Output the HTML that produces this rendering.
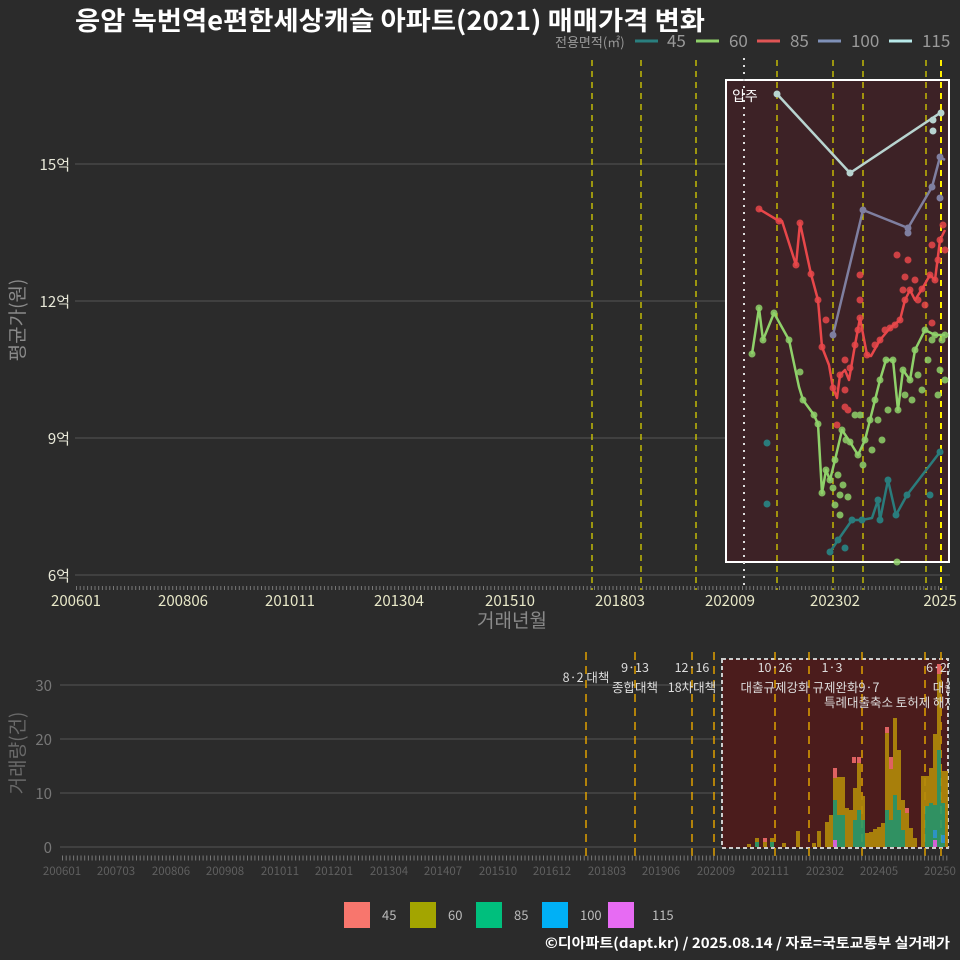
<!DOCTYPE html>
<html><head><meta charset="utf-8"><style>
html,body{margin:0;padding:0;background:#2b2b2b;}
svg{display:block;font-family:"Noto Sans CJK KR","Liberation Sans",sans-serif;}
</style></head><body>
<svg width="960" height="960" viewBox="0 0 960 960" xmlns="http://www.w3.org/2000/svg">
<rect width="960" height="960" fill="#2b2b2b"/>
<text x="75" y="30" fill="#fff" font-size="26" font-weight="bold" textLength="630" lengthAdjust="spacingAndGlyphs" font-family="Noto Sans CJK KR, sans-serif">응암 녹번역e편한세상캐슬 아파트(2021) 매매가격 변화</text>
<g font-size="17" fill="#9a9a9a">
<text x="555" y="47" font-size="13">전용면적(㎡)</text>
<line x1="635" y1="41" x2="658" y2="41" stroke="#2a7f7f" stroke-width="3"/><text x="667" y="47">45</text>
<line x1="696" y1="41" x2="719" y2="41" stroke="#8fd16a" stroke-width="3"/><text x="729" y="47">60</text>
<line x1="757" y1="41" x2="780" y2="41" stroke="#e05555" stroke-width="3"/><text x="790" y="47">85</text>
<line x1="818" y1="41" x2="841" y2="41" stroke="#7f91b8" stroke-width="3"/><text x="851" y="47">100</text>
<line x1="889" y1="41" x2="912" y2="41" stroke="#b8eaea" stroke-width="3"/><text x="922" y="47">115</text>
</g>
<g stroke="#666" stroke-width="0.8">
<line x1="75" y1="164" x2="950" y2="164"/><line x1="75" y1="301" x2="950" y2="301"/>
<line x1="75" y1="438" x2="950" y2="438"/><line x1="75" y1="575" x2="950" y2="575"/>
</g>
<g fill="#e8e8d8" font-size="15" text-anchor="end">
<text x="70" y="170">15억</text><text x="70" y="307">12억</text><text x="70" y="444">9억</text><text x="70" y="581">6억</text>
</g>
<text transform="translate(24,320) rotate(-90)" fill="#8a8a8a" font-size="19" text-anchor="middle">평균가(원)</text>
<rect x="726" y="80" width="223" height="482" fill="#3d2226" stroke="#fff" stroke-width="2"/>
<text x="732" y="101" fill="#fff" font-size="14">입주</text>
<line x1="744" y1="58" x2="744" y2="590" stroke="#ddd" stroke-width="2" stroke-dasharray="2,5"/>
<g stroke="#d8d000" stroke-width="1.3" stroke-dasharray="6,5">
<line x1="592" y1="60" x2="592" y2="590"/><line x1="641" y1="60" x2="641" y2="590"/><line x1="696" y1="60" x2="696" y2="590"/>
<line x1="777" y1="60" x2="777" y2="590"/><line x1="833" y1="60" x2="833" y2="590"/><line x1="863" y1="60" x2="863" y2="590"/>
<line x1="926" y1="60" x2="926" y2="590"/><line x1="941" y1="60" x2="941" y2="590" stroke="#ffee00" stroke-width="2"/>
</g>
<line x1="76" y1="588" x2="948" y2="588" stroke="#777" stroke-width="4" stroke-dasharray="1,2.7"/>
<g fill="#e8e8c8" font-size="15" text-anchor="middle">
<text x="76" y="606">200601</text><text x="183" y="606">200806</text><text x="290" y="606">201011</text><text x="399" y="606">201304</text>
<text x="510" y="606">201510</text><text x="620" y="606">201803</text><text x="730" y="606">202009</text><text x="835" y="606">202302</text><text x="940" y="606">2025</text>
</g>
<text x="512" y="627" fill="#8a8a8a" font-size="19" text-anchor="middle">거래년월</text>
<g fill="none" stroke-width="2.5" stroke-linejoin="round">
<polyline stroke="#b8d4d0" points="777,94 850,173 940,113"/>
<polyline stroke="#7f7fa0" points="833,335 863,210 908,228 932,187 940,157 945,160"/>
<polyline stroke="#e8474a" points="759,209 779,221 782,221 796,265 800,223 811,274 818,300 822,347 829,365 833,388 837,398 840,375 845,370 849,380 855,345 860,318 867,355 871,356 880,340 890,328 900,320 905,300 910,290 915,300 922,289 930,275 935,280 940,240 945,230"/>
<polyline stroke="#8fd16a" points="752,354 759,308 763,340 774,313 789,340 799,387 803,400 814,415 818,424 822,493 826,470 830,480 835,460 842,430 850,442 858,455 865,440 870,420 875,400 880,380 886,360 893,360 898,410 903,370 910,380 915,350 925,330 935,335 945,335"/>
<polyline stroke="#2a7c7c" points="830,552 838,540 845,530 852,520 862,520 872,518 878,500 880,520 888,480 896,515 907,495 940,452"/>
</g>
<g fill="#e8474a" opacity="0.85">
<circle cx="759" cy="209" r="3.5"/><circle cx="779" cy="221" r="3.5"/><circle cx="800" cy="223" r="3.5"/><circle cx="796" cy="265" r="3.5"/><circle cx="811" cy="274" r="3.5"/><circle cx="818" cy="300" r="3.5"/>
<circle cx="822" cy="347" r="3.5"/><circle cx="833" cy="388" r="3.5"/><circle cx="840" cy="375" r="3.5"/><circle cx="845" cy="360" r="3.5"/><circle cx="845" cy="390" r="3.5"/><circle cx="850" cy="368" r="3.5"/><circle cx="845" cy="407" r="3.5"/><circle cx="848" cy="410" r="3.5"/>
<circle cx="855" cy="345" r="3.5"/><circle cx="860" cy="318" r="3.5"/><circle cx="860" cy="275" r="3.5"/><circle cx="860" cy="300" r="3.5"/><circle cx="858" cy="330" r="3.5"/><circle cx="837" cy="425" r="3.5"/>
<circle cx="867" cy="355" r="3.5"/><circle cx="875" cy="345" r="3.5"/><circle cx="880" cy="340" r="3.5"/><circle cx="885" cy="330" r="3.5"/><circle cx="890" cy="328" r="3.5"/><circle cx="895" cy="325" r="3.5"/>
<circle cx="897" cy="255" r="3.5"/><circle cx="900" cy="320" r="3.5"/><circle cx="903" cy="290" r="3.5"/><circle cx="905" cy="300" r="3.5"/><circle cx="908" cy="260" r="3.5"/><circle cx="910" cy="290" r="3.5"/><circle cx="915" cy="280" r="3.5"/>
<circle cx="918" cy="300" r="3.5"/><circle cx="922" cy="289" r="3.5"/><circle cx="925" cy="305" r="3.5"/><circle cx="930" cy="275" r="3.5"/><circle cx="932" cy="245" r="3.5"/><circle cx="935" cy="280" r="3.5"/><circle cx="938" cy="260" r="3.5"/><circle cx="940" cy="240" r="3.5"/><circle cx="943" cy="225" r="3.5"/><circle cx="945" cy="250" r="3.5"/><circle cx="932" cy="323" r="3.5"/><circle cx="905" cy="277" r="3.5"/><circle cx="826" cy="320" r="3.5"/>
</g>
<g fill="#8fd16a" opacity="0.85">
<circle cx="752" cy="354" r="3.5"/><circle cx="759" cy="308" r="3.5"/><circle cx="763" cy="340" r="3.5"/><circle cx="774" cy="313" r="3.5"/><circle cx="789" cy="340" r="3.5"/><circle cx="800" cy="372" r="3.5"/><circle cx="803" cy="400" r="3.5"/><circle cx="814" cy="415" r="3.5"/><circle cx="818" cy="424" r="3.5"/><circle cx="822" cy="493" r="3.5"/>
<circle cx="826" cy="470" r="3.5"/><circle cx="830" cy="480" r="3.5"/><circle cx="833" cy="488" r="3.5"/><circle cx="835" cy="460" r="3.5"/><circle cx="838" cy="475" r="3.5"/><circle cx="840" cy="495" r="3.5"/><circle cx="843" cy="485" r="3.5"/><circle cx="848" cy="497" r="3.5"/><circle cx="835" cy="505" r="3.5"/><circle cx="840" cy="515" r="3.5"/>
<circle cx="842" cy="430" r="3.5"/><circle cx="846" cy="440" r="3.5"/><circle cx="850" cy="442" r="3.5"/><circle cx="855" cy="415" r="3.5"/><circle cx="860" cy="415" r="3.5"/><circle cx="858" cy="455" r="3.5"/><circle cx="863" cy="465" r="3.5"/><circle cx="865" cy="440" r="3.5"/><circle cx="870" cy="420" r="3.5"/><circle cx="872" cy="450" r="3.5"/>
<circle cx="875" cy="400" r="3.5"/><circle cx="878" cy="420" r="3.5"/><circle cx="880" cy="380" r="3.5"/><circle cx="882" cy="440" r="3.5"/><circle cx="886" cy="360" r="3.5"/><circle cx="888" cy="410" r="3.5"/><circle cx="893" cy="360" r="3.5"/><circle cx="898" cy="410" r="3.5"/><circle cx="903" cy="370" r="3.5"/><circle cx="905" cy="395" r="3.5"/>
<circle cx="910" cy="380" r="3.5"/><circle cx="912" cy="400" r="3.5"/><circle cx="915" cy="350" r="3.5"/><circle cx="918" cy="375" r="3.5"/><circle cx="922" cy="390" r="3.5"/><circle cx="925" cy="330" r="3.5"/><circle cx="928" cy="360" r="3.5"/><circle cx="932" cy="340" r="3.5"/><circle cx="935" cy="335" r="3.5"/><circle cx="938" cy="395" r="3.5"/><circle cx="940" cy="370" r="3.5"/><circle cx="942" cy="340" r="3.5"/><circle cx="945" cy="335" r="3.5"/><circle cx="945" cy="380" r="3.5"/><circle cx="897" cy="562" r="3.5"/>
</g>
<g fill="#2a7c7c"><circle cx="767" cy="443" r="3.5"/><circle cx="767" cy="504" r="3.5"/><circle cx="830" cy="552" r="3.5"/><circle cx="838" cy="540" r="3.5"/><circle cx="845" cy="548" r="3.5"/><circle cx="852" cy="520" r="3.5"/><circle cx="862" cy="520" r="3.5"/><circle cx="878" cy="500" r="3.5"/><circle cx="880" cy="520" r="3.5"/><circle cx="888" cy="480" r="3.5"/><circle cx="896" cy="515" r="3.5"/><circle cx="907" cy="495" r="3.5"/><circle cx="930" cy="495" r="3.5"/><circle cx="940" cy="452" r="3.5"/></g>
<g fill="#7f7fa0"><circle cx="833" cy="335" r="3.5"/><circle cx="863" cy="210" r="3.5"/><circle cx="908" cy="228" r="3.5"/><circle cx="908" cy="233" r="3.5"/><circle cx="932" cy="187" r="3.5"/><circle cx="940" cy="157" r="3.5"/><circle cx="940" cy="198" r="3.5"/></g>
<g fill="#b8d4d0"><circle cx="777" cy="94" r="3.5"/><circle cx="850" cy="173" r="3.5"/><circle cx="933" cy="120" r="3.5"/><circle cx="933" cy="131" r="3.5"/><circle cx="941" cy="113" r="3.5"/></g>

<g stroke="#666" stroke-width="0.8">
<line x1="60" y1="685" x2="950" y2="685"/><line x1="60" y1="739" x2="950" y2="739"/><line x1="60" y1="793" x2="950" y2="793"/><line x1="60" y1="847" x2="950" y2="847"/>
</g>
<g fill="#777" font-size="15" text-anchor="end">
<text x="52" y="691">30</text><text x="52" y="745">20</text><text x="52" y="799">10</text><text x="52" y="853">0</text>
</g>
<text transform="translate(24,753) rotate(-90)" fill="#6a6a6a" font-size="19" text-anchor="middle">거래량(건)</text>
<rect x="722" y="659" width="226" height="189" fill="#4b1c1c" stroke="#ccc" stroke-width="2" stroke-dasharray="4,3"/>
<g stroke="#e0a000" stroke-width="1.5" stroke-dasharray="8,6">
<line x1="586" y1="652" x2="586" y2="857"/><line x1="635" y1="652" x2="635" y2="857"/><line x1="692" y1="652" x2="692" y2="857"/><line x1="714" y1="652" x2="714" y2="857"/>
<line x1="775" y1="652" x2="775" y2="857"/><line x1="809" y1="652" x2="809" y2="857"/><line x1="862" y1="652" x2="862" y2="857"/><line x1="925" y1="652" x2="925" y2="857"/><line x1="941" y1="652" x2="941" y2="857"/>
</g>
<g opacity="0.9">
<g fill="#b38a0a">
<rect x="747" y="844" width="4" height="3"/><rect x="755" y="838" width="4" height="9"/><rect x="763" y="838" width="4" height="9"/><rect x="770" y="838" width="4" height="9"/><rect x="782" y="843" width="4" height="4"/>
<rect x="796" y="831" width="4" height="16"/><rect x="812" y="843" width="4" height="4"/><rect x="817" y="831" width="4" height="16"/><rect x="825" y="822" width="4" height="25"/>
<rect x="829" y="815" width="4" height="32"/><rect x="833" y="768" width="4" height="79"/><rect x="837" y="777" width="4" height="70"/><rect x="841" y="777" width="4" height="70"/><rect x="845" y="808" width="4" height="39"/><rect x="849" y="810" width="4" height="37"/>
<rect x="853" y="788" width="4" height="59"/><rect x="857" y="757" width="4" height="90"/><rect x="861" y="796" width="4" height="51"/><rect x="865" y="833" width="4" height="14"/><rect x="869" y="832" width="4" height="15"/><rect x="873" y="829" width="4" height="18"/><rect x="877" y="827" width="4" height="20"/>
<rect x="881" y="823" width="4" height="24"/><rect x="885" y="727" width="4" height="120"/><rect x="889" y="757" width="4" height="90"/><rect x="893" y="718" width="4" height="129"/><rect x="897" y="750" width="4" height="97"/><rect x="901" y="800" width="4" height="47"/><rect x="905" y="808" width="4" height="39"/><rect x="909" y="828" width="4" height="19"/><rect x="913" y="838" width="4" height="9"/>
<rect x="921" y="776" width="4" height="71"/><rect x="925" y="776" width="4" height="71"/><rect x="929" y="768" width="4" height="79"/><rect x="933" y="734" width="4" height="113"/><rect x="937" y="664" width="4" height="183"/><rect x="941" y="771" width="4" height="76"/><rect x="945" y="771" width="3" height="76"/>
</g>
<g fill="#2e9e6a">
<rect x="755" y="842" width="4" height="5"/><rect x="770" y="842" width="4" height="5"/><rect x="833" y="800" width="4" height="47"/><rect x="837" y="815" width="4" height="32"/><rect x="841" y="815" width="4" height="32"/>
<rect x="853" y="820" width="4" height="27"/><rect x="857" y="810" width="4" height="37"/><rect x="861" y="820" width="4" height="27"/><rect x="885" y="810" width="4" height="37"/><rect x="889" y="820" width="4" height="27"/><rect x="893" y="795" width="4" height="52"/><rect x="897" y="810" width="4" height="37"/><rect x="901" y="830" width="4" height="17"/>
<rect x="925" y="806" width="4" height="41"/><rect x="929" y="803" width="4" height="44"/><rect x="933" y="805" width="4" height="42"/><rect x="937" y="750" width="4" height="97"/><rect x="941" y="803" width="4" height="44"/>
</g>
<g fill="#f06a6a">
<rect x="763" y="838" width="4" height="4"/><rect x="833" y="768" width="4" height="10"/><rect x="852" y="757" width="4" height="6"/><rect x="857" y="757" width="4" height="6"/><rect x="885" y="727" width="4" height="6"/><rect x="889" y="757" width="4" height="12"/><rect x="905" y="808" width="4" height="5"/><rect x="937" y="664" width="4" height="10"/>
</g>
<g fill="#2aa0d8"><rect x="941" y="835" width="4" height="8"/><rect x="933" y="830" width="4" height="8"/></g>
<g fill="#e06ae8"><rect x="833" y="840" width="4" height="7"/><rect x="933" y="840" width="4" height="7"/></g>
</g>
<g fill="#ddd" font-size="12.5" text-anchor="middle">
<text x="586" y="682">8·2 대책</text>
<text x="635" y="672">9·13</text><text x="635" y="692">종합대책</text>
<text x="692" y="672">12·16</text><text x="692" y="692">18차대책</text>
<text x="775" y="672">10·26</text><text x="775" y="692">대출규제강화</text>
<text x="832" y="672">1·3</text><text x="846" y="692">규제완화9·7</text>
<text x="890" y="707">특례대출축소 토허제 해제</text>
<text x="940" y="672">6·27</text><text x="950" y="692">대출규</text>
</g>
<rect x="950" y="650" width="10" height="230" fill="#2b2b2b"/>
<line x1="62" y1="858" x2="948" y2="858" stroke="#777" stroke-width="5" stroke-dasharray="1,2.7"/>
<g fill="#5f5f5f" font-size="11.5" text-anchor="middle">
<text x="62" y="875">200601</text><text x="116" y="875">200703</text><text x="171" y="875">200806</text><text x="225" y="875">200908</text><text x="280" y="875">201011</text>
<text x="334" y="875">201201</text><text x="389" y="875">201304</text><text x="443" y="875">201407</text><text x="498" y="875">201510</text><text x="552" y="875">201612</text>
<text x="607" y="875">201803</text><text x="661" y="875">201906</text><text x="716" y="875">202009</text><text x="770" y="875">202111</text><text x="825" y="875">202302</text><text x="879" y="875">202405</text><text x="940" y="875">20250</text>
</g>
<g font-size="13" fill="#bbb">
<rect x="344" y="902" width="26" height="26" fill="#f8766d"/><text x="382" y="920">45</text>
<rect x="410" y="902" width="26" height="26" fill="#a3a500"/><text x="448" y="920">60</text>
<rect x="476" y="902" width="26" height="26" fill="#00bf7d"/><text x="514" y="920">85</text>
<rect x="542" y="902" width="26" height="26" fill="#00b0f6"/><text x="580" y="920">100</text>
<rect x="608" y="902" width="26" height="26" fill="#e76bf3"/><text x="652" y="920">115</text>
</g>
<text x="545" y="948" fill="#fff" font-size="14" font-weight="bold" textLength="405" lengthAdjust="spacingAndGlyphs">©디아파트(dapt.kr) / 2025.08.14 / 자료=국토교통부 실거래가</text>
</svg>
</body></html>
